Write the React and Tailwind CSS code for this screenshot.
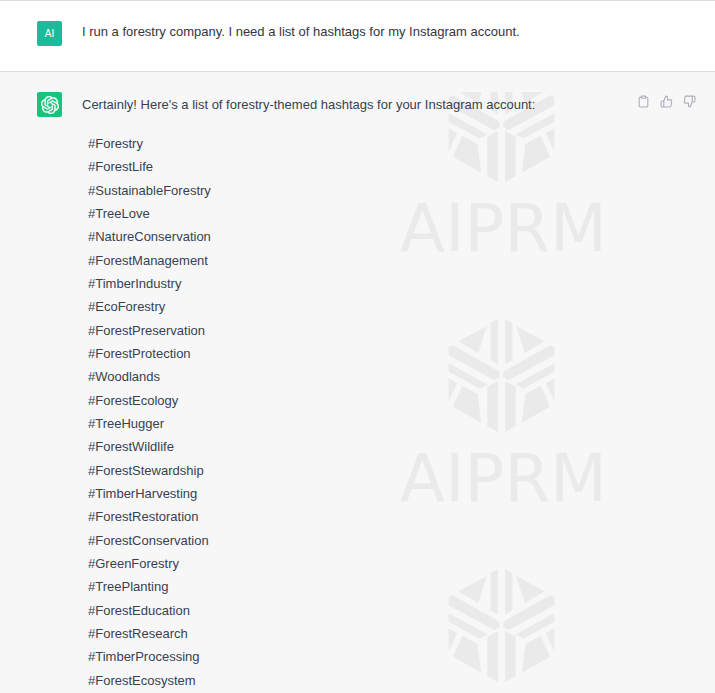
import { FiClipboard, FiThumbsUp, FiThumbsDown } from 'react-icons/fi';
import { SiOpenai } from 'react-icons/si';

const hashtags = [
  '#Forestry',
  '#ForestLife',
  '#SustainableForestry',
  '#TreeLove',
  '#NatureConservation',
  '#ForestManagement',
  '#TimberIndustry',
  '#EcoForestry',
  '#ForestPreservation',
  '#ForestProtection',
  '#Woodlands',
  '#ForestEcology',
  '#TreeHugger',
  '#ForestWildlife',
  '#ForestStewardship',
  '#TimberHarvesting',
  '#ForestRestoration',
  '#ForestConservation',
  '#GreenForestry',
  '#TreePlanting',
  '#ForestEducation',
  '#ForestResearch',
  '#TimberProcessing',
  '#ForestEcosystem'
];

const logoHalf = [
  '183,54 205,42 205,178 183,166',
  '172,63 146,144 86,109',
  '57,128 68,120 204,197 210,203 210,217 198,225 191,224 57,151',
  '57,175 174,239 150,251 57,201',
  '57,220 83,235 57,290',
  '98,243 144,268 155,354 70,306',
  '173,246 205,229 205,382 173,364'
];

function WatermarkLogo() {
  return (
    <svg viewBox="56 42 320 340" className="h-[113px] w-[107px] shrink-0" fill="currentColor">
      {logoHalf.map((points) => (
        <polygon key={points} points={points} />
      ))}
      {/* Right half mirrors the left one */}
      <g transform="translate(432 0) scale(-1 1)">
        {logoHalf.map((points) => (
          <polygon key={points} points={points} />
        ))}
      </g>
    </svg>
  );
}

function Watermark() {
  return (
    <div className="flex h-[250px] flex-col items-center">
      <WatermarkLogo />
      <span className="mt-2 pl-1 font-['DejaVu_Sans',sans-serif] text-[66px] leading-[77px]">AIPRM</span>
    </div>
  );
}

export default function App() {
  return (
    <main className="min-h-screen bg-[#f7f7f8] font-['Liberation_Sans',sans-serif] text-[13px] leading-[21px]">
      {/* User message */}
      <section className="flex gap-5 border-y border-[#dedee0] bg-white pt-5 pr-[19px] pb-[25px] pl-[37px] text-[#343541]">
        <div className="flex size-[25px] shrink-0 items-center justify-center rounded-xs bg-[#1bbc9b] text-[10px] text-white">
          AI
        </div>
        <p>I run a forestry company. I need a list of hashtags for my Instagram account.</p>
      </section>

      {/* Assistant message */}
      <section className="flex gap-5 pt-5 pr-[19px] pl-[37px] text-[#374151]">
        <div className="flex size-[25px] shrink-0 items-center justify-center rounded-xs bg-[#19c37d] text-white">
          <SiOpenai size={18} stroke="currentColor" strokeWidth={0.4} />
        </div>
        <div className="relative min-w-0 flex-1">
          <div className="absolute inset-0 flex justify-end overflow-hidden pr-[89px] text-[#eaeaea]" aria-hidden="true">
            <div className="-mt-[23px] flex flex-col items-center">
              <Watermark />
              <Watermark />
              <WatermarkLogo />
            </div>
          </div>
          <div className="relative">
            <div className="flex items-start justify-between">
              <p className="leading-[25px]">
                Certainly! Here's a list of forestry-themed hashtags for your Instagram account:
              </p>
              <div className="flex gap-2.5 pt-[3px] text-[#acacbe]">
                <button type="button" aria-label="Copy"><FiClipboard size={13} /></button>
                <button type="button" aria-label="Good response"><FiThumbsUp size={13} /></button>
                <button type="button" aria-label="Bad response"><FiThumbsDown size={13} /></button>
              </div>
            </div>
            <ul className="mt-4 grid min-h-[560px] auto-rows-fr pl-1.5">
              {hashtags.map((tag) => (
                <li key={tag}>{tag}</li>
              ))}
            </ul>
          </div>
        </div>
      </section>
    </main>
  );
}
